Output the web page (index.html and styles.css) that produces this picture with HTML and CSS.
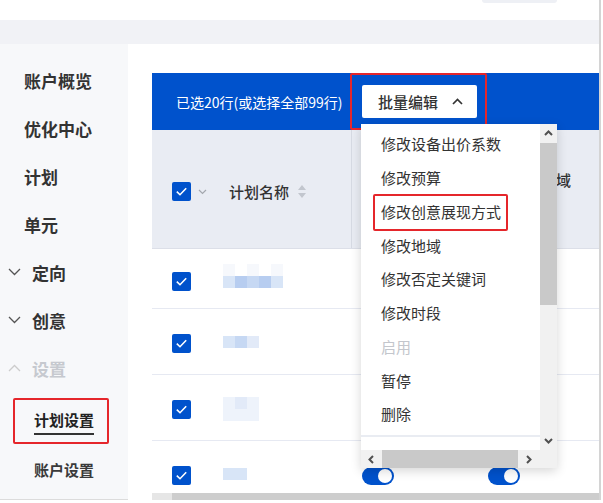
FILE: index.html
```html
<!DOCTYPE html>
<html lang="zh-CN">
<head>
  <meta charset="UTF-8">
  <meta name="viewport" content="width=device-width, initial-scale=1.0">
  <title>计划设置</title>
  <link rel="stylesheet" href="styles.css">
</head>
<body>
  <div class="page">
    <div class="topbar"><div class="top-btn"></div></div>
    <div class="band"></div>

    <div class="layout">
      <nav class="side">
        <div class="nav-item">账户概览</div>
        <div class="nav-item">优化中心</div>
        <div class="nav-item">计划</div>
        <div class="nav-item">单元</div>
        <div class="nav-item group">
          <svg width="13" height="8" viewBox="0 0 13 8"><path d="M1 1 L6.5 6.5 L12 1" fill="none" stroke="#555" stroke-width="1.3"/></svg>定向
        </div>
        <div class="nav-item group">
          <svg width="13" height="8" viewBox="0 0 13 8"><path d="M1 1 L6.5 6.5 L12 1" fill="none" stroke="#555" stroke-width="1.3"/></svg>创意
        </div>
        <div class="nav-item group muted">
          <svg width="13" height="8" viewBox="0 0 13 8"><path d="M1 7 L6.5 1.5 L12 7" fill="none" stroke="#ccc" stroke-width="1.3"/></svg>设置
        </div>
        <div class="nav-sub active">
          <span>计划设置</span>
          <i class="mark mark-side"></i>
        </div>
        <div class="nav-sub">账户设置</div>
      </nav>

      <main class="content">
        <div class="table">
          <div class="batch-bar">
            <span class="sel-info">已选20行(或选择全部99行)</span>
            <div class="batch">
              <button class="batch-btn">批量编辑
                <svg width="11" height="7" viewBox="0 0 11 7"><path d="M1 6 L5.5 1.5 L10 6" fill="none" stroke="#333" stroke-width="1.7"/></svg>
              </button>
              <i class="mark mark-btn"></i>

              <div class="menu">
                <div class="menu-list">
                  <div class="menu-item">修改设备出价系数</div>
                  <div class="menu-item">修改预算</div>
                  <div class="menu-item">修改创意展现方式<i class="mark mark-item"></i></div>
                  <div class="menu-item">修改地域</div>
                  <div class="menu-item">修改否定关键词</div>
                  <div class="menu-item">修改时段</div>
                  <div class="menu-item disabled">启用</div>
                  <div class="menu-item">暂停</div>
                  <div class="menu-item">删除</div>
                  <div class="menu-sep"></div>
                </div>
                <div class="vscroll">
                  <div class="sb-btn">
                    <svg width="9" height="6" viewBox="0 0 9 6"><path d="M1 5 L4.5 1.5 L8 5" fill="none" stroke="#505050" stroke-width="2"/></svg>
                  </div>
                  <div class="v-thumb"></div>
                  <div class="sb-fill"></div>
                  <div class="sb-btn down">
                    <svg width="9" height="6" viewBox="0 0 9 6"><path d="M1 1 L4.5 4.5 L8 1" fill="none" stroke="#505050" stroke-width="2"/></svg>
                  </div>
                </div>
                <div class="hscroll">
                  <div class="sb-btn left">
                    <svg width="6" height="9" viewBox="0 0 6 9"><path d="M5 1 L1.5 4.5 L5 8" fill="none" stroke="#505050" stroke-width="2"/></svg>
                  </div>
                  <div class="h-thumb"></div>
                  <div class="sb-btn right">
                    <svg width="6" height="9" viewBox="0 0 6 9"><path d="M1 1 L4.5 4.5 L1 8" fill="none" stroke="#505050" stroke-width="2"/></svg>
                  </div>
                </div>
                <div class="corner"></div>
              </div>
            </div>
          </div>

          <div class="thead">
            <div class="th th-name">
              <span class="cb"><svg width="19" height="19" viewBox="0 0 19 19"><path d="M4.8 9.6 L8 12.7 L14.2 6.3" fill="none" stroke="#fff" stroke-width="1.6"/></svg></span>
              <svg class="cb-more" width="9" height="6" viewBox="0 0 9 6"><path d="M1 1 L4.5 4.5 L8 1" fill="none" stroke="#a3a7ae" stroke-width="1.2"/></svg>
              <span class="th-title">计划名称</span>
              <svg class="sort" width="8" height="13" viewBox="0 0 8 13"><path d="M4 0 L8 5 H0 Z M4 13 L0 8 H8 Z" fill="#c2c6ce"/></svg>
            </div>
            <div class="th"></div>
            <div class="th th-region">地域</div>
          </div>

          <div class="row first">
            <div class="td-name">
              <span class="cb"><svg width="19" height="19" viewBox="0 0 19 19"><path d="M4.8 9.6 L8 12.7 L14.2 6.3" fill="none" stroke="#fff" stroke-width="1.6"/></svg></span>
              <div class="mosaic m1">
                <i class="s0"></i><i></i><i class="s0"></i><i></i><i class="s0"></i>
                <i class="s3"></i><i class="s5"></i><i class="s4"></i><i class="s5"></i><i class="s3"></i>
              </div>
            </div>
          </div>
          <div class="row">
            <div class="td-name">
              <span class="cb"><svg width="19" height="19" viewBox="0 0 19 19"><path d="M4.8 9.6 L8 12.7 L14.2 6.3" fill="none" stroke="#fff" stroke-width="1.6"/></svg></span>
              <div class="mosaic m2">
                <i class="s3"></i><i class="s4"></i><i class="s2"></i>
              </div>
            </div>
          </div>
          <div class="row">
            <div class="td-name">
              <span class="cb"><svg width="19" height="19" viewBox="0 0 19 19"><path d="M4.8 9.6 L8 12.7 L14.2 6.3" fill="none" stroke="#fff" stroke-width="1.6"/></svg></span>
              <div class="mosaic m3">
                <i class="s1"></i><i class="s2"></i><i class="s1"></i>
                <i class="s1"></i><i class="s1"></i><i class="s1"></i>
              </div>
            </div>
          </div>
          <div class="row last">
            <div class="td-name">
              <span class="cb"><svg width="19" height="19" viewBox="0 0 19 19"><path d="M4.8 9.6 L8 12.7 L14.2 6.3" fill="none" stroke="#fff" stroke-width="1.6"/></svg></span>
              <div class="mosaic m2">
                <i class="s3"></i><i class="s3"></i>
              </div>
            </div>
            <div class="td"><span class="toggle"></span></div>
            <div class="td"><span class="toggle"></span></div>
          </div>

          <div class="tscroll"><span class="tscroll-btn"></span></div>
        </div>
      </main>
    </div>
  </div>
</body>
</html>
```

FILE: styles.css
```css
* { box-sizing: border-box; }
html, body { margin: 0; }
body {
  width: 603px;
  height: 503px;
  overflow: hidden;
  background: #fff;
  color: #333;
  font-family: "Noto Sans CJK SC", "Noto Sans", sans-serif;
}
.page {
  width: 601px;
  height: 500px;
  border-right: 2px solid #d4d4d4;
  display: flex;
  flex-direction: column;
}
.topbar {
  height: 20px;
  display: flex;
  justify-content: flex-end;
  padding-right: 42px;
}
.top-btn {
  width: 75px;
  height: 3px;
  background: #eef0f5;
  border-radius: 0 0 4px 4px;
}
.band { height: 24px; background: #f1f2f6; }
.layout { flex: 1; display: flex; min-height: 0; }

/* sidebar */
.side {
  width: 128px;
  background: #f7f8fa;
  padding-top: 12px;
  border-bottom: 1px solid #dcdcdc;
}
.nav-item {
  height: 48px;
  display: flex;
  align-items: center;
  padding-left: 24px;
  font-size: 17px;
  font-weight: 700;
  color: #333;
}
.nav-item.group { padding-left: 8px; }
.nav-item.group svg { margin-right: 11px; }
.nav-item.muted { color: #c6c9cf; }
.nav-sub {
  position: relative;
  height: 50px;
  display: flex;
  align-items: center;
  padding-left: 34px;
  font-size: 15px;
  font-weight: 700;
  color: #3a3a3a;
}
.nav-sub.active { margin-top: 2px; color: #222; }
.nav-sub.active span { position: relative; }
.nav-sub.active span::after {
  content: "";
  position: absolute;
  left: 0;
  right: 0;
  bottom: -5px;
  height: 2px;
  background: #333;
}

/* red annotation boxes */
.mark {
  position: absolute;
  border: 2px solid #e5262b;
  border-radius: 2px;
  pointer-events: none;
}
.mark-side { left: 13px; top: 4px; width: 96px; height: 46px; }
.mark-btn { left: -12px; top: -12px; width: 137px; height: 57px; }
.mark-item { left: 12px; top: -1px; width: 135px; height: 37px; }

/* table */
.content { flex: 1; padding: 29px 0 0 24px; display: flex; }
.table { flex: 1; display: flex; flex-direction: column; }
.batch-bar {
  height: 57px;
  flex: none;
  background: #0052cc;
  display: flex;
  align-items: center;
  padding-left: 24px;
  color: #fff;
  font-size: 14px;
}
.sel-info { width: 186px; }
.batch { position: relative; }
.batch-btn {
  width: 115px;
  height: 33px;
  border: 0;
  border-radius: 2px;
  background: #fff;
  display: flex;
  align-items: center;
  padding: 0 0 0 16px;
  font-family: inherit;
  font-size: 15px;
  font-weight: 500;
  color: #333;
}
.batch-btn svg { margin-left: 14px; }

.menu {
  position: absolute;
  left: -1px;
  top: 39px;
  z-index: 5;
  width: 196px;
  height: 344px;
  background: #fff;
  box-shadow: 0 3px 10px rgba(0, 0, 0, 0.16);
  display: grid;
  grid-template-columns: 179px 17px;
  grid-template-rows: 326px 18px;
}
.menu-list { padding-top: 3px; }
.menu-item {
  position: relative;
  height: 33.75px;
  display: flex;
  align-items: center;
  padding-left: 20px;
  font-size: 15px;
  color: #333;
}
.menu-item.disabled { color: #c3c6cc; }
.menu-sep { margin-top: 4px; border-top: 2px solid #e9ecf2; }
.vscroll, .hscroll, .corner { background: #f1f1f1; }
.vscroll { display: flex; flex-direction: column; }
.sb-btn { display: flex; align-items: center; justify-content: center; }
.vscroll .sb-btn { height: 17px; }
.vscroll .down { margin-bottom: 1px; }
.v-thumb { margin-top: 2px; height: 162px; background: #c9c9c9; }
.sb-fill { flex: 1; }
.hscroll { display: flex; }
.hscroll .left { width: 20px; }
.h-thumb { width: 136px; margin-left: 1px; background: #c9c9c9; }
.hscroll .right { flex: 1; }

.thead {
  height: 119px;
  flex: none;
  background: #e9ecf3;
  border-bottom: 1px solid #dcdfe8;
  display: grid;
  grid-template-columns: 200px 126px 1fr;
}
.th { display: flex; align-items: center; font-size: 15px; color: #333; }
.th-name {
  padding: 5px 0 0 20px;
  border-right: 1px solid #d6dae3;
}
.cb {
  width: 19px;
  height: 19px;
  flex: none;
  border-radius: 2px;
  background: #0052cc;
  display: flex;
}
.cb-more { margin-left: 7px; }
.th-title { margin-left: 22px; font-weight: 500; }
.sort { margin-left: 9px; }
.th-region { padding: 0 0 20px 63px; font-weight: 500; }

.row {
  height: 66px;
  flex: none;
  display: grid;
  grid-template-columns: 200px 126px 1fr;
  border-bottom: 1px solid #e6e9f2;
  padding-top: 25px;
}
.row.first { height: 60px; padding-top: 23px; }
.row.last { flex: 1; height: auto; border-bottom: 0; }
.td-name { display: flex; align-items: flex-start; padding-left: 20px; }
.td { padding: 1px 0 0 10px; }

.mosaic {
  margin-left: 32px;
  display: grid;
  grid-template-columns: repeat(5, 12px);
  grid-auto-rows: 12px;
}
.mosaic.m1 { margin-top: -8px; }
.mosaic.m2 { margin-top: 2px; grid-template-columns: repeat(3, 12px); }
.mosaic.m3 { margin-top: -3px; grid-template-columns: repeat(3, 12px); }
.s0 { background: #f6f8fc; }
.s1 { background: #eef3fb; }
.s2 { background: #e2eaf8; }
.s3 { background: #d8e5f7; }
.s4 { background: #c6d8f3; }
.s5 { background: #b7cdf0; }

.toggle {
  position: relative;
  display: block;
  width: 32px;
  height: 18px;
  border-radius: 9px;
  background: #0052cc;
}
.toggle::after {
  content: "";
  position: absolute;
  right: 2px;
  top: 2px;
  width: 14px;
  height: 14px;
  border-radius: 50%;
  background: #fff;
}

.tscroll { height: 7px; flex: none; background: #cdcdcd; display: flex; }
.tscroll-btn { width: 20px; background: #e6e6e6; }
```
